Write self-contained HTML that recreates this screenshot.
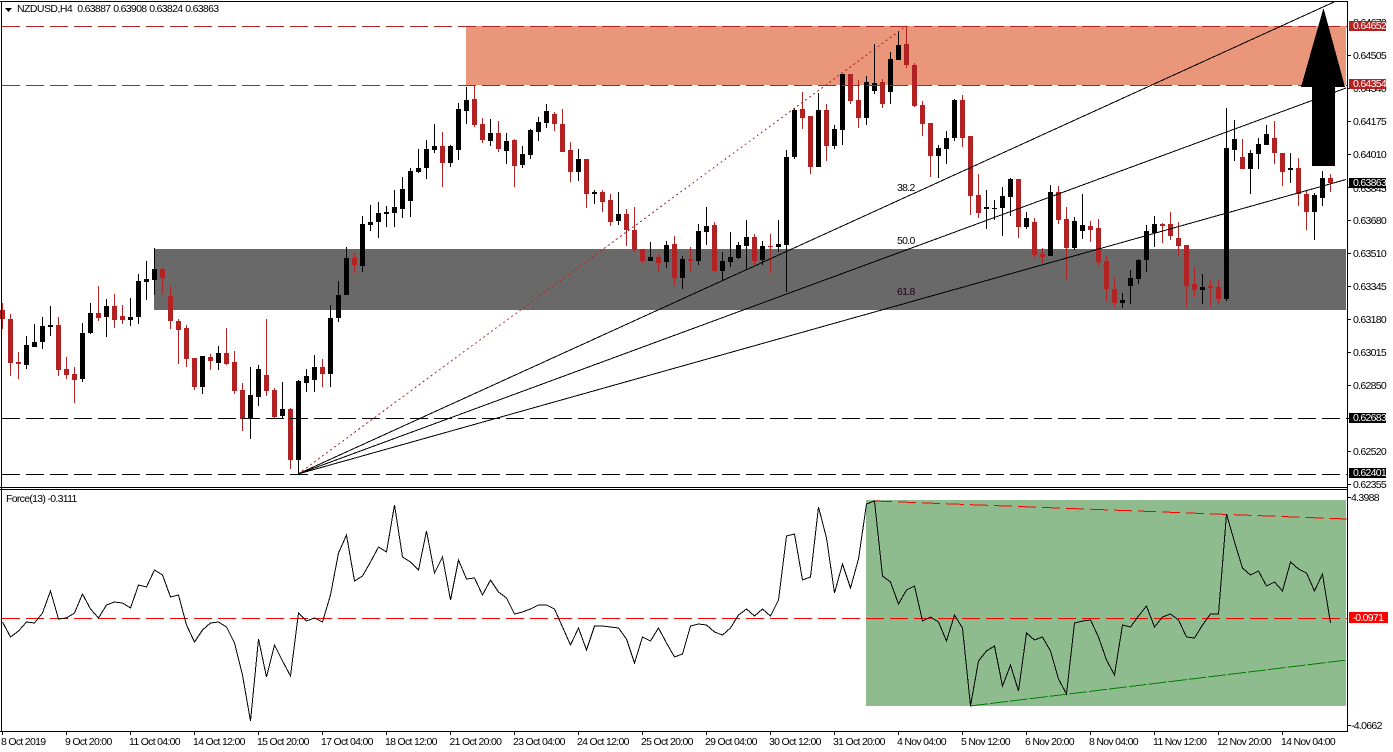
<!DOCTYPE html>
<html><head><meta charset="utf-8"><title>NZDUSD,H4</title>
<style>
html,body{margin:0;padding:0;background:#fff;width:1393px;height:752px;overflow:hidden}
svg{display:block;position:absolute;left:0;top:0}
text{font-family:"Liberation Sans",sans-serif;font-size:10.5px;letter-spacing:-.7px;fill:#000}
</style></head><body>
<svg width="1393" height="752" viewBox="0 0 1393 752" xmlns="http://www.w3.org/2000/svg">
<rect width="1393" height="752" fill="#fff"/>
<g shape-rendering="crispEdges">
<rect x="466" y="26" width="880" height="59" fill="#E9967A"/>
<rect x="154" y="249" width="1192" height="61" fill="#696969"/>
<rect x="866" y="500" width="480" height="206" fill="#8FBC8F"/>
<g fill="none" stroke-width="1">
<path stroke="#B22222" d="M2.5 303V329M10.5 314V376M18.5 352V379M58.5 317V376M66.5 357V379M74.5 367V403M98.5 286V321M114.5 294V328M122.5 305V324M162.5 268V294M170.5 286V329M178.5 319V364M186.5 325V367M194.5 358V390M210.5 354V370M226.5 328V365M234.5 351V394M242.5 383V431M266.5 319V396M274.5 388V418M290.5 408V469M322.5 359V387M354.5 253V273M442.5 132V187M474.5 85V127M482.5 118V143M498.5 121V152M514.5 139V187M554.5 112V131M562.5 109V152M570.5 142V182M586.5 159V208M602.5 190V212M610.5 194V226M626.5 209V246M634.5 207V252M642.5 249V263M658.5 254V272M674.5 236V286M690.5 247V272M714.5 222V272M754.5 234V265M770.5 234V273M802.5 92V129M810.5 116V174M826.5 104V161M850.5 74V104M858.5 80V128M882.5 79V108M906.5 26V68M914.5 63V107M922.5 101V136M930.5 123V177M962.5 95V147M970.5 136V215M978.5 174V218M1018.5 179V238M1034.5 218V258M1042.5 248V264M1058.5 186V224M1066.5 207V279M1090.5 221V242M1098.5 219V266M1106.5 256V301M1114.5 277V307M1162.5 223V243M1170.5 212V240M1178.5 222V256M1186.5 245V307M1194.5 267V297M1210.5 280V307M1218.5 280V304M1242.5 139V169M1274.5 121V164M1282.5 153V186M1298.5 158V206M1306.5 190V230M1330.5 174V192"/>
<path stroke="#B22222" stroke-width="5" d="M2.5 310V319M10.5 319V363M18.5 362V364M58.5 325V370M66.5 369V375M74.5 374V380M98.5 313V318M114.5 306V320M122.5 316V320M162.5 269V278M170.5 296V321M178.5 321V330M186.5 328V359M194.5 358V387M210.5 357V361M226.5 353V364M234.5 362V391M242.5 390V419M266.5 375V391M274.5 390V417M290.5 409V460M322.5 367V374M354.5 258V265M442.5 146V163M474.5 99V125M482.5 124V140M498.5 133V149M514.5 140V166M554.5 114V124M562.5 124V152M570.5 150V172M586.5 159V194M602.5 192V202M610.5 200V222M626.5 214V230M634.5 230V250M642.5 249V261M658.5 257V263M674.5 244V278M690.5 259V261M714.5 225V271M754.5 237V261M770.5 246V247M802.5 109V118M810.5 116V167M826.5 110V146M850.5 74V101M858.5 100V118M882.5 82V104M906.5 44V65M914.5 65V106M922.5 105V124M930.5 123V156M962.5 100V138M970.5 136V196M978.5 195V213M1018.5 179V227M1034.5 222V255M1042.5 254V257M1058.5 192V220M1066.5 219V248M1090.5 226V230M1098.5 228V262M1106.5 261V289M1114.5 289V303M1162.5 224V226M1170.5 224V236M1178.5 238V246M1186.5 245V286M1194.5 284V290M1210.5 286V288M1218.5 287V299M1242.5 157V169M1274.5 138V153M1282.5 153V172M1298.5 168V194M1306.5 194V212M1330.5 178V183"/>
<path stroke="#000" d="M26.5 336V369M34.5 324V347M42.5 317V349M50.5 306V336M82.5 323V382M90.5 303V334M106.5 299V337M130.5 298V326M138.5 274V324M146.5 261V300M154.5 248V295M202.5 356V394M218.5 346V370M250.5 367V439M258.5 365V406M282.5 382V418M298.5 380V474M306.5 369V392M314.5 355V392M330.5 305V387M338.5 281V322M346.5 247V295M362.5 216V272M370.5 205V231M378.5 202V238M386.5 206V227M394.5 190V227M402.5 177V218M410.5 168V217M418.5 149V173M426.5 140V179M434.5 124V153M450.5 145V167M458.5 103V160M466.5 87V124M490.5 119V146M506.5 133V164M522.5 146V168M530.5 129V159M538.5 117V141M546.5 104V128M578.5 149V181M594.5 190V204M618.5 192V225M650.5 242V261M666.5 241V268M682.5 256V289M698.5 224V265M706.5 207V245M722.5 252V280M730.5 232V267M738.5 242V259M746.5 220V269M762.5 241V265M778.5 220V252M786.5 150V292M794.5 108V159M818.5 93V167M834.5 125V149M842.5 74V145M866.5 76V125M874.5 44V94M890.5 52V104M898.5 31V60M938.5 145V178M946.5 131V164M954.5 99V141M986.5 190V229M994.5 200V220M1002.5 187V236M1010.5 178V216M1026.5 212V229M1050.5 185V256M1074.5 217V250M1082.5 194V239M1122.5 293V308M1130.5 270V304M1138.5 259V284M1146.5 225V272M1154.5 216V247M1202.5 274V304M1226.5 108V301M1234.5 120V161M1250.5 150V194M1258.5 138V169M1266.5 125V145M1290.5 153V183M1314.5 193V240M1322.5 171V206"/>
<path stroke="#000" stroke-width="5" d="M26.5 345V365M34.5 342V347M42.5 326V342M50.5 325V327M82.5 333V379M90.5 313V333M106.5 306V317M130.5 317V320M138.5 281V317M146.5 279V282M154.5 269V280M202.5 356V387M218.5 353V363M250.5 395V419M258.5 369V397M282.5 409V416M298.5 381V460M306.5 376V383M314.5 367V380M330.5 318V374M338.5 295V318M346.5 258V295M362.5 224V266M370.5 222V225M378.5 213V222M386.5 212V214M394.5 207V213M402.5 189V209M410.5 171V201M418.5 168V172M426.5 149V168M434.5 146V150M450.5 146V163M458.5 109V150M466.5 100V111M490.5 133V141M506.5 141V151M522.5 154V165M530.5 130V155M538.5 122V132M546.5 111V123M578.5 159V172M594.5 192V194M618.5 214V221M650.5 257V261M666.5 245V262M682.5 259V278M698.5 231V261M706.5 226V232M722.5 261V271M730.5 257V262M738.5 245V258M746.5 237V246M762.5 246V260M778.5 244V247M786.5 157V245M794.5 110V157M818.5 110V167M834.5 129V146M842.5 74V130M866.5 82V118M874.5 83V91M890.5 59V92M898.5 45V60M938.5 148V156M946.5 138V149M954.5 100V138M986.5 207V209M994.5 208V209M1002.5 196V208M1010.5 179V197M1026.5 218V227M1050.5 192V256M1074.5 221V248M1082.5 225V231M1122.5 300V303M1130.5 278V286M1138.5 260V279M1146.5 231V260M1154.5 224V233M1202.5 287V290M1226.5 148V299M1234.5 139V150M1250.5 153V169M1258.5 144V154M1266.5 134V145M1290.5 168V170M1314.5 195V212M1322.5 178V198"/>
<path stroke="#B22222" stroke-dasharray="18 6" d="M2 26.5H1347M2 85.5H1347"/>
<path stroke="#000" stroke-dasharray="18 6" d="M2 418.5H1347M2 474.5H1347"/>
<path stroke="#B22222" stroke-dasharray="2 3" d="M298 474L906 26"/>
<path stroke="#000" d="M298 474L1334 2M298 474L1346 88M298 474L1346 179.5"/>
<path stroke="#FF0000" stroke-dasharray="18 6" d="M2 618.5H1347"/>
<path stroke="#FF0000" stroke-dasharray="18 6" d="M874 501L1347 519"/>
<path stroke="#008000" stroke-dasharray="18 2" d="M970 706L1347 660"/>
<polyline stroke="#000" points="2.5,622 10.5,637 18.5,631 26.5,622 34.5,623 42.5,613 50.5,591 58.5,619 66.5,618 74.5,613 82.5,594 90.5,609 98.5,618 106.5,605 114.5,602 122.5,603 130.5,608 138.5,585 146.5,587 154.5,570 162.5,575 170.5,597 178.5,595 186.5,625 194.5,642 202.5,630 210.5,623 218.5,622 226.5,627 234.5,643 242.5,675 250.5,721 258.5,639 266.5,677 274.5,645 282.5,661 290.5,676 298.5,613 306.5,621 314.5,618 322.5,622 330.5,595 338.5,553 346.5,535 354.5,581 362.5,576 370.5,562 378.5,547 386.5,552 394.5,505 402.5,557 410.5,562 418.5,570 426.5,531 434.5,573 442.5,557 450.5,600 458.5,560 466.5,579 474.5,578 482.5,595 490.5,580 498.5,592 506.5,598 514.5,614 522.5,612 530.5,609 538.5,605 546.5,605 554.5,609 562.5,627 570.5,645 578.5,628 586.5,650 594.5,626 602.5,626 610.5,627 618.5,628 626.5,639 634.5,663 642.5,637 650.5,641 658.5,628 666.5,643 674.5,657 682.5,654 690.5,626 698.5,624 706.5,625 714.5,632 722.5,635 730.5,628 738.5,615 746.5,609 754.5,616 762.5,609 770.5,616 778.5,600 786.5,536 794.5,534 802.5,580 810.5,577 818.5,507 826.5,538 834.5,593 842.5,564 850.5,588 858.5,559 866.5,504 874.5,501 882.5,576 890.5,582 898.5,604 906.5,590 914.5,586 922.5,621 930.5,617 938.5,622 946.5,641 954.5,615 962.5,628 970.5,706 978.5,661 986.5,651 994.5,646 1002.5,686 1010.5,665 1018.5,691 1026.5,633 1034.5,640 1042.5,637 1050.5,651 1058.5,679 1066.5,694 1074.5,623 1082.5,621 1090.5,620 1098.5,637 1106.5,660 1114.5,675 1122.5,625 1130.5,627 1138.5,616 1146.5,606 1154.5,627 1162.5,617 1170.5,614 1178.5,620 1186.5,637 1194.5,638 1202.5,625 1210.5,614 1218.5,614 1226.5,514 1234.5,542 1242.5,568 1250.5,575 1258.5,571 1266.5,586 1274.5,582 1282.5,591 1290.5,562 1298.5,569 1306.5,573 1314.5,591 1322.5,574 1330.5,623"/>
<path stroke="#000" d="M0 1.5H1347M1.5 1V732M1347.5 1V732M0 487.5H1347M0 489.5H1347M0 731.5H1348"/>
<path stroke="#000" d="M1348 55.5h3M1348 88.5h3M1348 121.5h3M1348 154.5h3M1348 187.5h3M1348 220.5h3M1348 253.5h3M1348 286.5h3M1348 319.5h3M1348 352.5h3M1348 385.5h3M1348 418.5h3M1348 451.5h3M1348 484.5h3M1348 497.5h3M1348 725.5h3M2.5 732V735M66.5 732V735M130.5 732V735M194.5 732V735M258.5 732V735M322.5 732V735M386.5 732V735M450.5 732V735M514.5 732V735M578.5 732V735M642.5 732V735M706.5 732V735M770.5 732V735M834.5 732V735M898.5 732V735M962.5 732V735M1026.5 732V735M1090.5 732V735M1154.5 732V735M1218.5 732V735M1282.5 732V735"/>
</g>
<polygon fill="#000" points="1323.5,8 1345,87 1335,87 1335,166 1312,166 1312,87 1301,87"/>
<text x="1353" y="26">0.64670</text>
<text x="1353" y="92">0.64340</text>
<text x="1353" y="192">0.63845</text>
<rect x="1349" y="21" width="37" height="10" fill="#B22222"/>
<rect x="1349" y="79" width="37" height="10" fill="#B22222"/>
<rect x="1349" y="178" width="37" height="10" fill="#000"/>
<rect x="1349" y="413" width="37" height="10" fill="#000"/>
<rect x="1349" y="468" width="37" height="10" fill="#000"/>
<rect x="1349" y="612" width="39" height="11" fill="#FF0000"/>
</g>
<polygon fill="#000" points="5,8 12,8 8.5,12"/>
<text x="17" y="12" style="letter-spacing:-.55px">NZDUSD,H4</text>
<text x="77.3" y="12">0.63887</text>
<text x="113.3" y="12">0.63908</text>
<text x="149.3" y="12">0.63824</text>
<text x="185.3" y="12">0.63863</text>
<text x="6" y="502">Force(13) -0.3111</text>
<text x="897" y="191">38.2</text>
<text x="897" y="244">50.0</text>
<text x="897" y="295" style="fill:#200020">61.8</text>
<text x="1353" y="29" style="fill:#fff">0.64652</text>
<text x="1353" y="59">0.64505</text>
<text x="1353" y="87" style="fill:#fff">0.64354</text>
<text x="1353" y="125">0.64175</text>
<text x="1353" y="158">0.64010</text>
<text x="1353" y="186" style="fill:#fff">0.63863</text>
<text x="1353" y="224">0.63680</text>
<text x="1353" y="257">0.63510</text>
<text x="1353" y="290">0.63345</text>
<text x="1353" y="323">0.63180</text>
<text x="1353" y="356">0.63015</text>
<text x="1353" y="389">0.62850</text>
<text x="1353" y="421" style="fill:#fff">0.62683</text>
<text x="1353" y="455">0.62520</text>
<text x="1353" y="476" style="fill:#fff">0.62401</text>
<text x="1353" y="488">0.62355</text>
<text x="1351" y="501">4.3988</text>
<text x="1352.5" y="621" style="fill:#fff">-0.0971</text>
<text x="1351" y="729">-4.0662</text>
<text x="1" y="745">8 Oct 2019</text>
<text x="65" y="745">9 Oct 20:00</text>
<text x="129" y="745">11 Oct 04:00</text>
<text x="193" y="745">14 Oct 12:00</text>
<text x="257" y="745">15 Oct 20:00</text>
<text x="321" y="745">17 Oct 04:00</text>
<text x="385" y="745">18 Oct 12:00</text>
<text x="449.5" y="745">21 Oct 20:00</text>
<text x="513" y="745">23 Oct 04:00</text>
<text x="577" y="745">24 Oct 12:00</text>
<text x="641" y="745">25 Oct 20:00</text>
<text x="705" y="745">29 Oct 04:00</text>
<text x="769" y="745">30 Oct 12:00</text>
<text x="833" y="745">31 Oct 20:00</text>
<text x="897" y="745">4 Nov 04:00</text>
<text x="961" y="745">5 Nov 12:00</text>
<text x="1025" y="745">6 Nov 20:00</text>
<text x="1089" y="745">8 Nov 04:00</text>
<text x="1153" y="745">11 Nov 12:00</text>
<text x="1217" y="745">12 Nov 20:00</text>
<text x="1281" y="745">14 Nov 04:00</text>
</svg>
</body></html>
